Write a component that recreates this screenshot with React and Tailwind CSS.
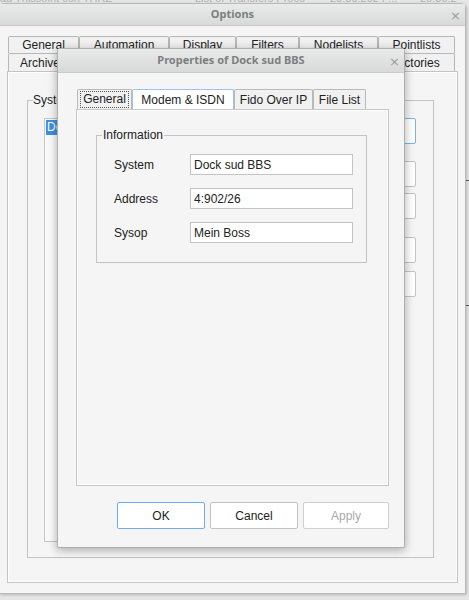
import React from 'react';

const ROW1 = [
  { label: 'General', w: 'w-[71px]' },
  { label: 'Automation', w: 'w-[90px]' },
  { label: 'Display', w: 'w-[67px]' },
  { label: 'Filters', w: 'w-[63px]' },
  { label: 'Nodelists', w: 'w-[79px]' },
  { label: 'Pointlists', w: 'w-[77px]' },
];

const ROW2 = [
  { label: 'Archivers', w: 'w-[74px]' },
  { label: 'Events', w: 'w-[95px]' },
  { label: 'Mailer', w: 'w-[95px]' },
  { label: 'Security', w: 'w-[95px]' },
  { label: 'Directories', w: 'w-[88px]' },
];

function TitleBar({ title, h }) {
  return (
    <div className={`${h} shrink-0 flex items-center justify-center relative bg-gradient-to-b from-[#e9ebeb] to-[#d8dada] border-b border-[#c9cbcb]`}>
      <span className="font-['Noto_Sans',sans-serif] font-bold text-[11px] text-[#7b7f7f]">{title}</span>
      <span className="absolute right-[4px] top-1/2 -translate-y-1/2 text-[13px] leading-none text-[#9a9c9c] font-['DejaVu_Sans',sans-serif]">×</span>
    </div>
  );
}

function Field({ label, value }) {
  return (
    <div className="flex items-center h-[21px]">
      <span className="w-[76px] pl-[17px] box-content">{label}</span>
      <div className="w-[163px] h-[21px] bg-white border border-[#c4c4c4] flex items-center pl-[3px] text-[#222]">{value}</div>
    </div>
  );
}

function PropertiesDialog() {
  const tabs = [
    { label: 'General', w: 'w-[55px]', kind: 'focus' },
    { label: 'Modem & ISDN', w: 'w-[102px]', kind: 'hover' },
    { label: 'Fido Over IP', w: 'w-[79px]', kind: '' },
    { label: 'File List', w: 'w-[53px]', kind: '' },
  ];
  return (
    <div className="absolute left-[57px] top-[48px] w-[348px] h-[500px] flex flex-col bg-[#f5f5f5] border border-[#aeb0b0] rounded-t-[3px] shadow-[0_2px_10px_rgba(0,0,0,0.32)]">
      <TitleBar title="Properties of Dock sud BBS" h="h-[24px]" />
      <div className="flex flex-col pl-[18px] pr-[15px] pt-[16px]">
        <div className="flex h-[20px] pl-px">
          {tabs.map((t) => (
            <div
              key={t.label}
              className={`${t.w} h-[20px] flex items-center justify-center border border-b-0 rounded-t-[2px] ${
                t.kind === 'hover' ? 'bg-white border-[#9fc2ea]' : 'bg-[#f1f1f1] border-[#b9b9b9]'
              }`}
            >
              {t.kind === 'focus' ? (
                <span className="px-[2px] leading-[15px] border border-dotted border-[#555]">{t.label}</span>
              ) : (
                <span>{t.label}</span>
              )}
            </div>
          ))}
        </div>
        <div className="h-[377px] border border-[#c6c6c6] bg-[#f5f5f5] shadow-[inset_1px_1px_0_#ffffff,inset_-1px_-1px_0_#ffffff] pl-[19px] pr-[21px] pt-[18px]">
          <fieldset className="border border-[#c3c3c3] h-[135px] pt-[12px] flex flex-col gap-[13px]">
            <legend className="ml-[5px] px-px leading-[14px] text-[#222]">Information</legend>
            <Field label="System" value="Dock sud BBS" />
            <Field label="Address" value="4:902/26" />
            <Field label="Sysop" value="Mein Boss" />
          </fieldset>
        </div>
        <div className="flex justify-end gap-[5px] pt-[16px]">
          <button className="w-[88px] h-[27px] bg-white border border-[#71abea] rounded-[2px] text-[#222]">OK</button>
          <button className="w-[88px] h-[27px] bg-white border border-[#c2c2c2] rounded-[2px] text-[#222]">Cancel</button>
          <button className="w-[86px] h-[27px] bg-white border border-[#cfcfcf] rounded-[2px] text-[#aaaaaa]">Apply</button>
        </div>
      </div>
    </div>
  );
}

export default function App() {
  return (
    <div className="relative w-[469px] h-[600px] overflow-hidden bg-[#e6e6e6] font-['Liberation_Sans',Arial,sans-serif] text-[12px] text-[#222]">
      {/* strip of the window underneath */}
      <div className="h-[3px] overflow-hidden flex text-[11px] text-[#b0b0b0] whitespace-nowrap">
        <div className="-mt-[10px] flex">
          <span className="w-[195px]">ad Thissoint con THRZ</span>
          <span className="w-[135px]">List of Transfers Proco</span>
          <span className="w-[90px]">20:30:2024 ...</span>
          <span>20:30:2</span>
        </div>
      </div>

      {/* Options window */}
      <div className="-ml-px w-[467px] h-[591px] flex flex-col bg-[#f5f5f5] border border-[#b8baba] rounded-t-[5px] shadow-[1px_1px_3px_rgba(0,0,0,0.2)]">
        <TitleBar title="Options" h="h-[22px]" />
        <div className="flex flex-col pl-[7px] pt-[10px]">
          <div className="flex pl-px">
            {ROW1.map((t) => (
              <div key={t.label} className={`${t.w} h-[17px] flex items-center justify-center bg-[#f1f1f1] border border-b-0 border-[#b7b7b7] rounded-t-[2px]`}>
                {t.label}
              </div>
            ))}
          </div>
          <div className="flex pl-px">
            {ROW2.map((t) => (
              <div key={t.label} className={`${t.w} h-[18px] flex items-center justify-center bg-[#f1f1f1] border border-b-0 border-[#b7b7b7] rounded-t-[2px]`}>
                {t.label}
              </div>
            ))}
          </div>
          <div className="w-[451px] h-[512px] border border-[#c4c4c4] shadow-[inset_1px_1px_0_#ffffff,inset_-1px_-1px_0_#ffffff] pl-[19px] pr-[23px] pt-[21px]">
            <fieldset className="border border-[#c3c3c3] h-[465px] flex pl-[16px] pr-[17px] pt-[11px]">
              <legend className="-ml-[11px] leading-[14px]">System Nodes</legend>
              <div className="w-[270px] h-[424px] bg-[#fafafa] border border-[#c6c6c6] p-px">
                <div className="h-[15px] w-[150px] bg-[#3f8fe4] text-white pl-[1px] leading-[15px]">Dock sud BBS</div>
              </div>
              <div className="flex-1 flex flex-col items-end">
                <button className="w-[90px] h-[26px] bg-white border border-[#7db2ea] rounded-[2px] mt-0">Add</button>
                <button className="w-[90px] h-[26px] bg-white border border-[#c4c4c4] rounded-[2px] mt-[17px]">Edit</button>
                <button className="w-[90px] h-[26px] bg-white border border-[#c4c4c4] rounded-[2px] mt-[6px]">Remove</button>
                <button className="w-[90px] h-[26px] bg-white border border-[#c4c4c4] rounded-[2px] mt-[18px]">Up</button>
                <button className="w-[90px] h-[26px] bg-white border border-[#c4c4c4] rounded-[2px] mt-[8px]">Down</button>
              </div>
            </fieldset>
          </div>
        </div>
      </div>

      {/* right edge of the window underneath */}
      <div className="absolute right-0 top-[180px] w-[3px] h-px bg-[#555]" />
      <div className="absolute right-0 top-[305px] w-[3px] h-px bg-[#555]" />

      <PropertiesDialog />
    </div>
  );
}
